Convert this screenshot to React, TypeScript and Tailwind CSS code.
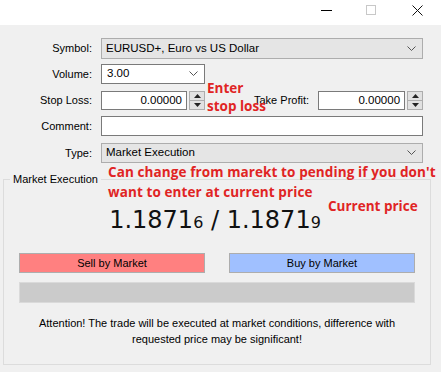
import React from "react";

const ui = { fontFamily: '"Liberation Sans", Arial, sans-serif' };
const note = { fontFamily: '"Open Sans", "DejaVu Sans", sans-serif' };

function Chevron() {
  return (
    <svg width="9" height="6" viewBox="0 0 9 6" className="shrink-0">
      <path d="M0.5 0.5 L4.5 4.5 L8.5 0.5" fill="none" stroke="#555" strokeWidth="1" />
    </svg>
  );
}

function Spinner() {
  return (
    <div className="ml-[2px] flex h-[19px] w-[16px] flex-col border border-[#adadad] bg-[#e1e1e1]">
      <div className="flex flex-1 items-center justify-center border-b border-[#adadad]">
        <svg width="7" height="4" viewBox="0 0 7 4"><path d="M0 4 L3.5 0 L7 4 Z" fill="#222" /></svg>
      </div>
      <div className="flex flex-1 items-center justify-center">
        <svg width="7" height="4" viewBox="0 0 7 4"><path d="M0 0 L3.5 4 L7 0 Z" fill="#222" /></svg>
      </div>
    </div>
  );
}

function Label({ children }: { children: React.ReactNode }) {
  return <div className="w-[93px] shrink-0 pr-[1px] text-right text-[11px] text-black">{children}</div>;
}

export default function App() {
  return (
    <div className="relative h-[372px] w-[441px] overflow-hidden bg-[#f0f0f0]" style={ui}>
      {/* title bar */}
      <div className="flex h-[25px] items-start justify-end bg-white pt-[5px]">
        <div className="mr-[34px] mt-[5px] h-[1px] w-[11px] bg-black" />
        <div className="mr-[36px] h-[10px] w-[10px] border border-[#c8c8c8]" />
        <svg width="11" height="11" viewBox="0 0 11 11" className="mr-[18px]">
          <path d="M0.5 0.5 L10.5 10.5 M10.5 0.5 L0.5 10.5" stroke="#111" strokeWidth="1" />
        </svg>
      </div>

      {/* form */}
      <div className="flex flex-col pt-[13px]">
        <div className="flex h-[21px] items-center">
          <Label>Symbol:</Label>
          <div className="ml-[8px] flex h-[21px] w-[322px] items-center justify-between border border-[#adadad] bg-[#e5e5e5] pl-[4px] pr-[6px] text-[11.5px]">
            <span>EURUSD+, Euro vs US Dollar</span>
            <Chevron />
          </div>
        </div>
        <div className="mt-[5px] flex h-[20px] items-center">
          <Label>Volume:</Label>
          <div className="ml-[8px] flex h-[20px] w-[104px] items-center justify-between border border-[#7a7a7a] bg-white pl-[5px] pr-[6px] text-[11.5px]">
            <span>3.00</span>
            <Chevron />
          </div>
        </div>
        <div className="mt-[7px] flex h-[19px] items-center">
          <Label>Stop Loss:</Label>
          <div className="ml-[8px] flex h-[19px] w-[86px] items-center justify-end border border-[#7a7a7a] bg-white pr-[4px] text-[11.5px]">
            0.00000
          </div>
          <Spinner />
          <div className="ml-[49px] text-[11px]">Take Profit:</div>
          <div className="ml-[9px] flex h-[19px] w-[87px] items-center justify-end border border-[#7a7a7a] bg-white pr-[4px] text-[11.5px]">
            0.00000
          </div>
          <Spinner />
        </div>
        <div className="mt-[6px] flex h-[20px] items-center">
          <Label>Comment:</Label>
          <div className="ml-[8px] h-[20px] w-[322px] border border-[#7a7a7a] bg-white" />
        </div>
        <div className="mt-[7px] flex h-[20px] items-center">
          <Label>Type:</Label>
          <div className="ml-[8px] flex h-[20px] w-[322px] items-center justify-between border border-[#adadad] bg-[#e5e5e5] pl-[4px] pr-[6px] text-[11.5px]">
            <span>Market Execution</span>
            <Chevron />
          </div>
        </div>
      </div>

      {/* group box */}
      <div className="relative ml-[3px] mt-[16px] h-[186px] w-[428px] border border-[#dcdcdc]">
        <div className="absolute left-[6px] top-[-8px] bg-[#f0f0f0] px-[3px] text-[11px] leading-[14px]">
          Market Execution
        </div>
        <div className="mt-[22px] flex items-baseline justify-center pr-[4px] text-[#111]" style={{ fontFamily: '"DejaVu Sans", sans-serif' }}>
          <span className="text-[24px]">1.1871</span>
          <span className="text-[16px]">6</span>
          <span className="text-[24px]">&nbsp;/&nbsp;1.1871</span>
          <span className="text-[16px]">9</span>
        </div>
        <div className="mt-[15px] flex justify-between px-[15px]">
          <div className="flex h-[20px] w-[186px] items-center justify-center border border-[#adadad] bg-[#ff8080] text-[11px]">
            Sell by Market
          </div>
          <div className="flex h-[20px] w-[186px] items-center justify-center border border-[#adadad] bg-[#a0c0ff] text-[11px]">
            Buy by Market
          </div>
        </div>
        <div className="mx-[15px] mt-[9px] h-[21px] border border-[#dadada] bg-[#cbcbcb]" />
        <div className="mt-[12px] text-center text-[11px] leading-[16px]">
          Attention! The trade will be executed at market conditions, difference with
          <br />
          requested price may be significant!
        </div>
      </div>

      {/* annotations */}
      <div className="absolute left-[207px] top-[79px] text-[13.5px] font-bold leading-[18px] text-[#e02424]" style={note}>
        Enter
        <br />
        stop loss
      </div>
      <div className="absolute left-[108px] top-[162px] text-[13.5px] font-bold leading-[20px] tracking-[0.1px] text-[#e02424]" style={note}>
        Can change from marekt to pending if you don't
        <br />
        want to enter at current price
      </div>
      <div className="absolute left-[328px] top-[197px] text-[13.5px] font-bold leading-[18px] text-[#e02424]" style={note}>
        Current price
      </div>
    </div>
  );
}
